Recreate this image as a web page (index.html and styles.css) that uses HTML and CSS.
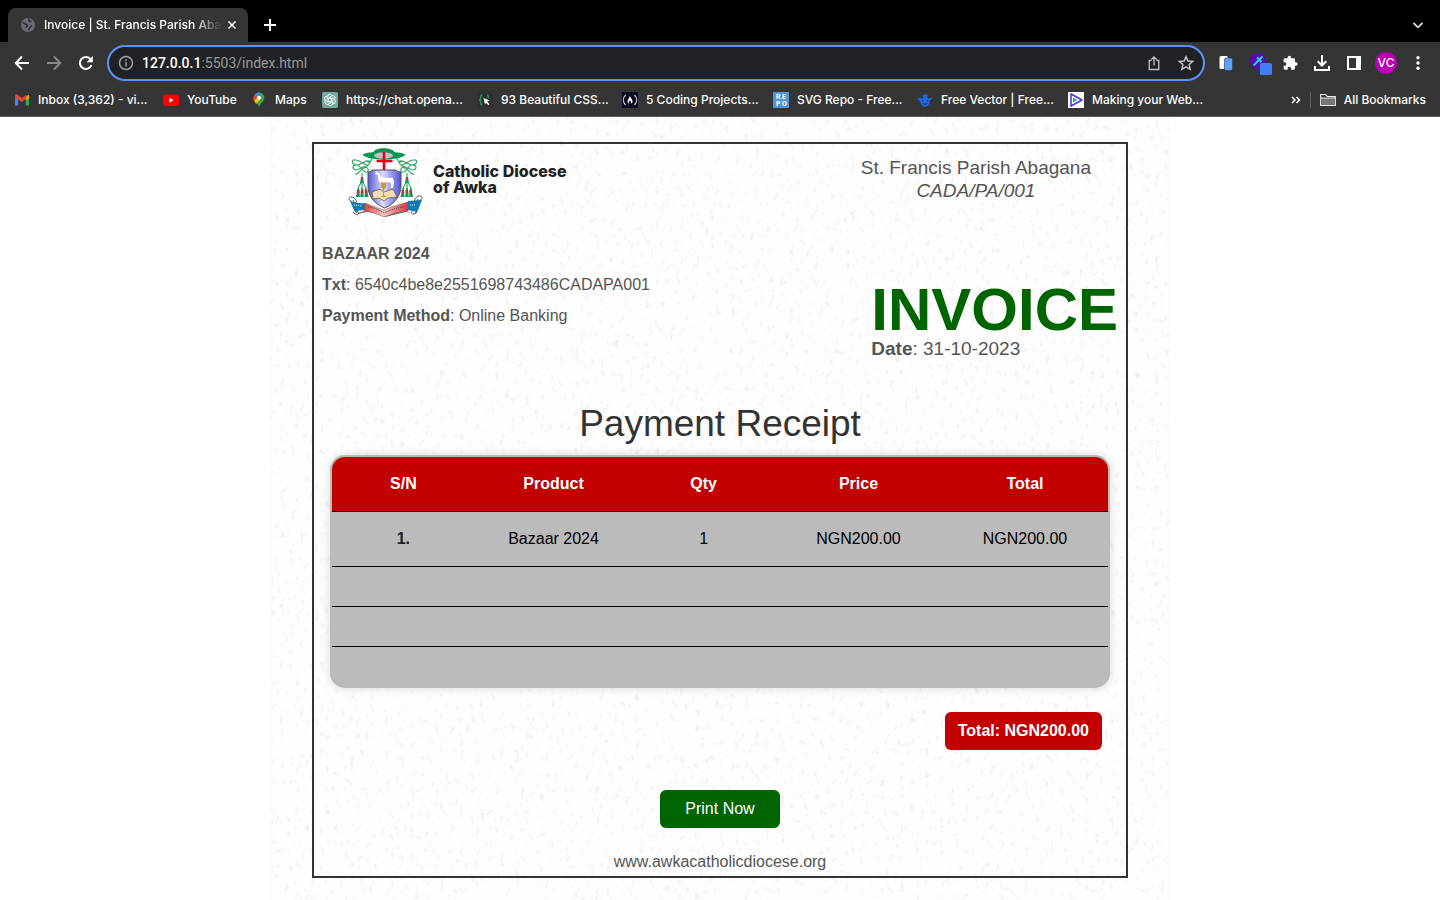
FILE: index.html
```html
<!DOCTYPE html>
<html lang="en">
<head>
<meta charset="utf-8">
<title>Invoice | St. Francis Parish Abagana</title>
<link rel="stylesheet" href="styles.css">
</head>
<body>
<header class="browser">
  <div class="tabs">
    <div class="tab">
      <svg class="i16" viewBox="0 0 16 16"><circle cx="8" cy="8" r="7" fill="#6b6f75"/><path d="M2.500 6c2-1 2 1.500 4 1.500 2 1 0 2.500-1 3M9.500 1.500c-2 2 0 3 2 3M9 13.500c0-2 0-3 3-5" fill="none" stroke="#35363a" stroke-width="1.800"/></svg>
      <span class="tab-title">Invoice | St. Francis Parish Aba</span>
      <button class="icon" aria-label="Close tab"><svg class="i16" viewBox="0 0 16 16"><path d="M4.500 4.500l7 7M11.500 4.500l-7 7" stroke="#fff" stroke-width="1.600"/></svg></button>
    </div>
    <button class="icon" aria-label="New tab"><svg class="i16" viewBox="0 0 16 16"><path d="M2 8h12M8 2v12" stroke="#fff" stroke-width="2"/></svg></button>
    <button class="icon tab-search" aria-label="Search tabs"><svg class="i16" viewBox="0 0 16 16"><path d="M3.500 6L8 10.300 12.500 6" fill="none" stroke="#ddd" stroke-width="1.800"/></svg></button>
  </div>
  <div class="toolbar">
    <div class="nav">
      <button class="icon" aria-label="Back"><svg class="i16" viewBox="0 0 16 16"><path d="M15 8H2M8 1.500L1.800 8 8 14.500" fill="none" stroke="#fff" stroke-width="2"/></svg></button>
      <button class="icon" aria-label="Forward"><svg class="i16" viewBox="0 0 16 16"><path d="M1 8h13M8 1.500L14.200 8 8 14.500" fill="none" stroke="#88898c" stroke-width="2"/></svg></button>
      <button class="icon" aria-label="Reload"><svg class="i16" viewBox="0 0 16 16"><path d="M13.500 10.200A6 6 0 1 1 12.400 4" fill="none" stroke="#fff" stroke-width="2"/><path d="M14.800 1v6.200H8.600z" fill="#fff"/></svg></button>
    </div>
    <div class="address">
      <svg class="i16" viewBox="0 0 16 16" fill="none" stroke="#9aa0a6" stroke-width="1.500"><circle cx="8" cy="8" r="6.500"/><path d="M8 7v4.500M8 4.300v1.600"/></svg>
      <span class="url"><b>127.0.0.1</b>:5503/index.html</span>
      <button class="icon" aria-label="Share"><svg class="i16" viewBox="0 0 16 16" fill="none" stroke="#bdc1c6" stroke-width="1.300"><path d="M5.500 5.500H3.200v9h9.600v-9h-2.300M8 10.500V2M5.300 4.500L8 1.800l2.700 2.700"/></svg></button>
      <button class="icon" aria-label="Bookmark this page"><svg class="i16" viewBox="0 0 16 16"><path d="M8 1.600l1.900 4.400 4.800.4-3.600 3.200 1.100 4.700L8 11.800l-4.200 2.500 1.100-4.700L1.300 6.400 6.100 6z" fill="none" stroke="#c4c7cb" stroke-width="1.400"/></svg></button>
    </div>
    <div class="extensions">
      <button class="icon" aria-label="Copy extension"><svg class="i16" viewBox="0 0 16 16"><rect x="1.500" y="1" width="8.500" height="13" rx="1.500" fill="#fff"/><rect x="6.500" y="3" width="8" height="12.500" rx="1.500" fill="#5aa2fb" stroke="#35363a" stroke-width=".6"/></svg></button>
      <button class="icon" aria-label="Colour picker"><svg class="picker" viewBox="0 0 24 24"><circle cx="8" cy="10" r="8" fill="#5a07b5"/><path d="M3.500 14.500L9 9" stroke="#16d9e3" stroke-width="2"/><path d="M7 6.500l4.500 4.500M9 9l3.500-3.500" stroke="#16d9e3" stroke-width="2.200"/><rect x="10" y="12" width="12" height="12" rx="1.500" fill="#437cf5"/></svg></button>
      <button class="icon" aria-label="Extensions"><svg class="i16" viewBox="0 0 24 24"><path fill="#fff" d="M21 11h-1.500V7a2 2 0 0 0-2-2h-4V3.500a2.500 2.500 0 0 0-5 0V5h-4a2 2 0 0 0-2 2v3.800H4a2.700 2.700 0 0 1 0 5.400H2.500V20a2 2 0 0 0 2 2h3.800v-1.500a2.700 2.700 0 0 1 5.400 0V22h3.800a2 2 0 0 0 2-2v-4H21a2.500 2.500 0 0 0 0-5z"/></svg></button>
      <button class="icon" aria-label="Downloads"><svg class="i16" viewBox="0 0 16 16" fill="none" stroke="#fff" stroke-width="2"><path d="M8 0v10M3.700 6.200L8 10.500l4.300-4.300M1 11v4h14v-4"/></svg></button>
      <button class="icon" aria-label="Side panel"><svg class="i16" viewBox="0 0 16 16"><path fill="#fff" fill-rule="evenodd" d="M1 1h14v14H1zM3 3v10h7V3z"/></svg></button>
      <button class="avatar" aria-label="Profile">VC</button>
      <button class="icon" aria-label="Menu"><svg class="i16" viewBox="0 0 16 16" fill="#fff"><circle cx="8" cy="2.800" r="1.700"/><circle cx="8" cy="8" r="1.700"/><circle cx="8" cy="13.200" r="1.700"/></svg></button>
    </div>
  </div>
  <nav class="bookmarks">
    <div class="marks">
      <a href="#"><svg class="i16" viewBox="0 0 16 16"><path d="M1 4v9.500h3.200V6z" fill="#4285f4"/><path d="M15 4v9.500h-3.200V6z" fill="#34a853"/><path d="M11.800 4.500L15 2.800V6l-3.200 2z" fill="#fbbc04"/><path d="M1 3.500C1 2 2.700 1.800 3.700 2.700L8 6l4.300-3.300.8 3.300L8 10 1 5.500z" fill="#ea4335"/></svg>Inbox (3,362) - vi...</a>
      <a href="#"><svg class="i16" viewBox="0 0 16 16"><rect y="2.500" width="16" height="11.500" rx="3" fill="#f00"/><path d="M6.500 5.800v5l4-2.500z" fill="#fff"/></svg>YouTube</a>
      <a href="#"><svg class="i16" viewBox="0 0 16 16"><path d="M8 .5a5.300 5.300 0 0 0-5.300 5.300C2.700 10 7 11 8 15.700 9 11 13.300 10 13.300 5.800A5.300 5.300 0 0 0 8 .5z" fill="#34a853"/><path d="M3.200 8.300L9.500.8a5.300 5.300 0 0 0-5.900 2c-1.200 1.700-1.200 3.800-.4 5.500z" fill="#4285f4"/><path d="M3.500 2.800l3 2.500-3.300 4C2 7 2.400 4.500 3.500 2.800z" fill="#ea4335"/><path d="M3.200 8.500L6 6l3 2-4 4z" fill="#fbbc04"/><circle cx="8" cy="5.800" r="2" fill="#fff"/></svg>Maps</a>
      <a href="#"><svg class="i16" viewBox="0 0 16 16"><rect width="16" height="16" rx="2" fill="#74aa9c"/><g fill="none" stroke="#fff" stroke-width=".9"><path id="petal" d="M8 6L5.300 7.500V4.600a2.400 2.400 0 0 1 4.500-1"/><use href="#petal" transform="rotate(60 8 8)"/><use href="#petal" transform="rotate(120 8 8)"/><use href="#petal" transform="rotate(180 8 8)"/><use href="#petal" transform="rotate(240 8 8)"/><use href="#petal" transform="rotate(300 8 8)"/></g></svg>https://chat.opena...</a>
      <a href="#"><svg class="i16" viewBox="0 0 16 16"><rect width="16" height="16" rx="2" fill="#303030"/><path d="M5 3C3 3 4 6 3.500 7L2.500 8l1 1C4 10 3 13 5 13M10 3c2 0 1 2 1.500 3" fill="none" stroke="#169b62" stroke-width="1.500"/><path d="M6.500 6l6 2.500-2.400 1 2.400 2.700-1.200 1.100L9 10.700l-1 1.800z" fill="#fff"/></svg>93 Beautiful CSS...</a>
      <a href="#"><svg class="i16" viewBox="0 0 16 16"><rect width="16" height="16" fill="#0a0a23"/><path d="M3.500 3C.7 6 .7 10 3.500 13M12.500 3c2.800 3 2.800 7 0 10" fill="none" stroke="#ccc" stroke-width="1.200"/><path d="M8 3.500c.3 2.500 3 4 2.500 6.500L9.200 12V9.800L8 8.500 6.800 9.800V12L5.500 10c0-2.500 2.200-4 2.500-6.500z" fill="#fff"/></svg>5 Coding Projects...</a>
      <a href="#"><svg class="i16 repo" viewBox="0 0 16 16"><rect width="16" height="16" rx="1" fill="#5a93d1"/><text x="3" y="7">R</text><text x="9" y="7">E</text><text x="3" y="14">P</text><text x="9" y="14">O</text></svg>SVG Repo - Free...</a>
      <a href="#"><svg class="i16" viewBox="0 0 16 16" fill="#1869ec"><path d="M.5 5.500l3.500 1c2-1.500 6-1.500 8 0l3.500-1.500-1 2.500-1.700 1c0 3.500-2 6-4.800 6S3.200 12 3.200 9L1.500 8z"/><path d="M5.500 3h2L8 1l1 2 2-.5L10 5.500H6z"/><circle cx="6" cy="9" r=".8" fill="#303134"/><circle cx="10.500" cy="9" r=".8" fill="#303134"/><path d="M5.500 11.500q2.500 1.500 5 0" stroke="#303134" fill="none"/></svg>Free Vector | Free...</a>
      <a href="#"><svg class="i16" viewBox="0 0 16 16"><rect width="16" height="16" fill="#fff"/><path d="M3 2l11 6-11 6z" fill="none" stroke="#4b35df" stroke-width="1.600" stroke-linejoin="round"/><path d="M5 5.500L9.500 8 5 10.500z" fill="#18b8a6"/></svg>Making your Web...</a>
    </div>
    <button class="more" aria-label="More bookmarks"><svg class="i16" viewBox="0 0 16 16"><path d="M4 5l3 3-3 3M8.500 5l3 3-3 3" fill="none" stroke="#fff" stroke-width="1.500"/></svg></button>
    <a class="all" href="#"><svg class="i16" viewBox="0 0 16 16"><path d="M.7 13.500v-11h5l1.500 2h8.100v9z" fill="none" stroke="#e8eaed" stroke-width="1.200"/><path d="M1 6h14v7H1z" fill="#777"/><path d="M1 6h14" stroke="#e8eaed"/></svg>All Bookmarks</a>
  </nav>
</header>
<main class="paper">
  <svg class="grain" aria-hidden="true"><filter id="fibres" x="0" y="0" width="100%" height="100%"><feTurbulence type="fractalNoise" baseFrequency=".2 .13" numOctaves="4" seed="7"/><feColorMatrix values="0 0 0 0 .7  0 0 0 0 .66  0 0 0 0 .62  1.200 0 0 0 -.72"/></filter><rect width="100%" height="100%" filter="url(#fibres)"/></svg>
  <section class="invoice">
    <div class="head">
      <div class="brand">
        <svg class="crest" viewBox="0 0 76 72">
          <defs><linearGradient id="shield"><stop offset="0" stop-color="#5656d5"/><stop offset=".45" stop-color="#dcdcff"/><stop offset="1" stop-color="#5151d8"/></linearGradient><linearGradient id="ribbon"><stop offset="0" stop-color="#df3f42"/><stop offset=".45" stop-color="#f8c5c1"/><stop offset="1" stop-color="#df3339"/></linearGradient></defs>
          <path d="M14.500 8c3-3 8-2 11-3 2-5 18-5 21 0 3 1 8 0 11 3-7 6-36 6-43 0z" fill="#07944f"/><ellipse cx="35.500" cy="8.500" rx="9.500" ry="3.300" fill="#c0c0c3"/>
          <g id="cord"><g fill="none" stroke="#35a86c" stroke-width="1.200"><path d="M25 11c-2 1-2 3-4 6M22 15c-3-4-9 3-13 3-5 0-7-6-1-5 5 0 8 6 12 5 3-2 1-4-1-3M20 19c-6 0-8 4-12 4-5-1-3-6 1-5 5 1 6 9 10 7 3-2 0-6-3-4-5 2-5 7-9 6"/></g><path d="M14 26v10M14 34l-4 7M14 34l4 7M14 34v8" stroke="#0a9951" fill="none"/><g fill="#17985a"><path d="M13 30h2l1 6h-4zM9.500 41h1.500l1 9H8zM13.200 41h1.600l1 9h-3.600zM17 41h1.500l2 9h-4z"/></g><g fill="#e3202b"><path d="M13 30h2v3h-2zM9 43h2.500v3H9zM13 43h2.300v3H13zM17 43h2.300v3H17z"/></g></g>
          <use href="#cord" transform="matrix(-1 0 0 1 73 0)"/>
          <path d="M20 25q4 0 4-2h24q0 2 5 2v14c0 9-6 18-16.500 22C25 56 20 48 20 39z" fill="url(#shield)" stroke="#555" stroke-width="1"/>
          <path d="M36 5v18M28.500 14h16" stroke="#e5001b" stroke-width="2.600"/>
          <path d="M28 24l3 2 2 4c4 2 8 0 12 1l1 4-1 6h-2v-5l-3-1-5 1v6h-2v-6l-2-1-1-7-3-1z" fill="#fff"/>
          <path d="M24 45l8-3 4 3 9-3 4 8-9 1-4 3-5-3-6 1z" fill="#f2dfba" stroke="#66501e" stroke-width=".7"/><path d="M33 35h5v4q0 3-2 3v6l3 2h-6l2-2v-6q-2 0-2-3z" fill="#cf9f1f"/><circle cx="36" cy="34" r="1.800" fill="#fff"/>
          <path d="M3 57l5 9 9-2v-6q10 3 20 8 9-5 21-8v6l8 3 6-9-4 9-10-2-21 5q-10-5-18-5l-9 2z" fill="#777"/>
          <path d="M2 54q10 3 15 2v7q-6 0-10 2z" fill="#087db8"/><path d="M17 56q7 3 19 7 12-5 24-8v9q-11 0-24 6-11-5-20-6z" fill="url(#ribbon)" stroke="#555" stroke-width=".4"/><path d="M60 54l14-1-5 12-9-2z" fill="#087db8"/>
          <g fill="none" stroke="#555" stroke-width=".9"><path d="M4 55c-7-4 0-8 4-2 2 4-3 3-3 0M71 54c7-4 0-8-4-2-2 4 3 3 3 0M5 65c5 6 8 0 3-1M69 65c-5 5-8 0-3-2"/></g>
          <path d="M20 60q8 1 16 6 10-5 20-6" fill="none" stroke="#333" stroke-dasharray="1 1"/><path d="M6 58l8 1M62 58h6" stroke="#fff" stroke-dasharray="1 1"/>
        </svg>
        <h2>Catholic Diocese<br>of Awka</h2>
      </div>
      <div class="parish">St. Francis Parish Abagana<br><em>CADA/PA/001</em></div>
    </div>
    <div class="details">
      <div class="payment"><p><b>BAZAAR 2024</b></p><p><b>Txt</b>: 6540c4be8e2551698743486CADAPA001</p><p><b>Payment Method</b>: Online Banking</p></div>
      <div class="issued"><h1>INVOICE</h1><p><b>Date</b>: 31-10-2023</p></div>
    </div>
    <div class="receipt">
      <h3>Payment Receipt</h3>
      <table>
        <colgroup><col class="sn"><col class="product"><col class="qty"><col class="price"><col></colgroup>
        <thead><tr><th>S/N</th><th>Product</th><th>Qty</th><th>Price</th><th>Total</th></tr></thead>
        <tbody><tr><th class="serial" scope="row">1.</th><td>Bazaar 2024</td><td>1</td><td>NGN200.00</td><td>NGN200.00</td></tr>
        <tr class="blank"><td colspan="5"></td></tr><tr class="blank"><td colspan="5"></td></tr><tr class="blank"><td colspan="5"></td></tr></tbody>
      </table>
      <div class="total">Total: NGN200.00</div>
    </div>
    <button class="print">Print Now</button>
    <footer>www.awkacatholicdiocese.org</footer>
  </section>
</main>
</body>
</html>
```
FILE: styles.css
```css
* { box-sizing: border-box; }
body { margin: 0; min-height: 100vh; display: flex; flex-direction: column; background: #fff; font: 16px/20px "Liberation Sans", Arial, sans-serif; color: #555; }
h1, h2, h3, p { margin: 0; }
button { font: inherit; border: 0; padding: 0; }
svg { display: block; flex: none; }
.i16 { width: 16px; height: 16px; }

.browser { background: #353535; color: #fff; font: 500 12px/16px Inter, sans-serif; border-bottom: 1px solid #5c5c5c; }
.icon { background: none; }
.tabs { height: 42px; background: #000; display: flex; align-items: flex-end; padding: 0 14px 0 8px; gap: 14px; }
.tabs > .icon { padding-bottom: 9px; }
.tabs > .tab-search { margin-left: auto; padding: 0 0 9px; }
.tab { width: 240px; height: 34px; border-radius: 8px 8px 0 0; background: #353535; display: flex; align-items: center; gap: 8px; padding: 0 8px 0 12px; }
.tab-title { flex: 1; margin-right: -6px; overflow: hidden; white-space: nowrap; mask-image: linear-gradient(to right, #000 84%, transparent); }
.toolbar { height: 42px; display: flex; align-items: center; padding: 0 14px; }
.nav { display: flex; gap: 16px; margin-right: 13px; }
.address { flex: 1; height: 36px; display: flex; align-items: center; gap: 16px; padding: 0 9px; border: 2px solid #5e92f6; border-radius: 18px; background: #202124; font: 14px/18px Roboto, sans-serif; }
.address .url { flex: 1; margin-left: -8px; color: #999; }
.url b { color: #fff; font-weight: 500; }
.extensions { display: flex; align-items: center; gap: 16px; margin-left: 13px; }
.picker { width: 24px; height: 24px; margin-right: -8px; }
.avatar { width: 22px; height: 22px; margin: 0 -3px; border-radius: 50%; background: #b900b4; color: #fff; font-size: 12px; }
.bookmarks { height: 32px; display: flex; align-items: center; padding: 0 14px; }
.marks { flex: 1; display: grid; grid-template-columns: 149px 88px 71px 155px 145px 151px 144px 151px auto; }
.bookmarks a { display: flex; align-items: center; gap: 8px; color: inherit; text-decoration: none; white-space: nowrap; }
.repo text { font: 700 7px Roboto, sans-serif; fill: #fff; }
.more { background: none; }
.bookmarks .all { margin-left: 6px; padding-left: 9px; border-left: 1px solid #606060; }

.paper { position: relative; flex: 1; width: 100%; max-width: 900px; margin: 0 auto; padding: 25px 42px 22px; background: #fdfdfd; }
.grain { position: absolute; inset: 0; width: 100%; height: 100%; }
.invoice { position: relative; border: 2px solid #333; display: flex; flex-direction: column; }
.head { display: flex; justify-content: space-between; padding: 3px 35px 0 34px; }
.brand { display: flex; gap: 9px; }
.crest { width: 76px; height: 72px; }
.brand h2 { padding-top: 16px; font: 800 16px/16px Inter, sans-serif; color: #222; }
.parish { padding-top: 9px; font-size: 19px; line-height: 23px; text-align: center; }
.details { display: flex; justify-content: space-between; padding: 25px 8px 0; }
.payment { display: flex; flex-direction: column; gap: 11px; }
.issued { padding-top: 36px; font-size: 19px; line-height: 23px; }
.issued h1 { color: #006400; font-size: 60px; line-height: 57px; padding-top: 1px; margin-bottom: -1px; }
.receipt { padding: 45px 16px 0; display: flex; flex-direction: column; }
h3 { text-align: center; color: #333; font-size: 37px; line-height: 38px; font-weight: 400; }
table { margin-top: 12px; width: 100%; table-layout: fixed; border: 2px solid #bbb; border-radius: 15px; background: #bbb; border-spacing: 0; overflow: hidden; box-shadow: 0 0 10px rgba(0, 0, 0, .14); color: #000; text-align: center; }
.sn, .qty { width: 18.4%; }
.product { width: 20.3%; }
.price { width: 21.5%; }
th, td { height: 55px; padding: 0; border-bottom: 1px solid #000; }
thead th { background: #c20000; color: #fff; }
.serial { color: #222; }
.blank td { height: 40px; }
tr:last-child.blank td { border: 0; height: 39px; }
.total { align-self: flex-end; margin: 24px 8px 0; padding: 9px 13px; border-radius: 6px; background: #c20000; color: #fff; font-weight: 700; }
.print { align-self: center; margin-top: 40px; padding: 9px 25px; border-radius: 6px; background: #006400; color: #fff; }
footer { margin: 24px 0 4px; text-align: center; }
```
